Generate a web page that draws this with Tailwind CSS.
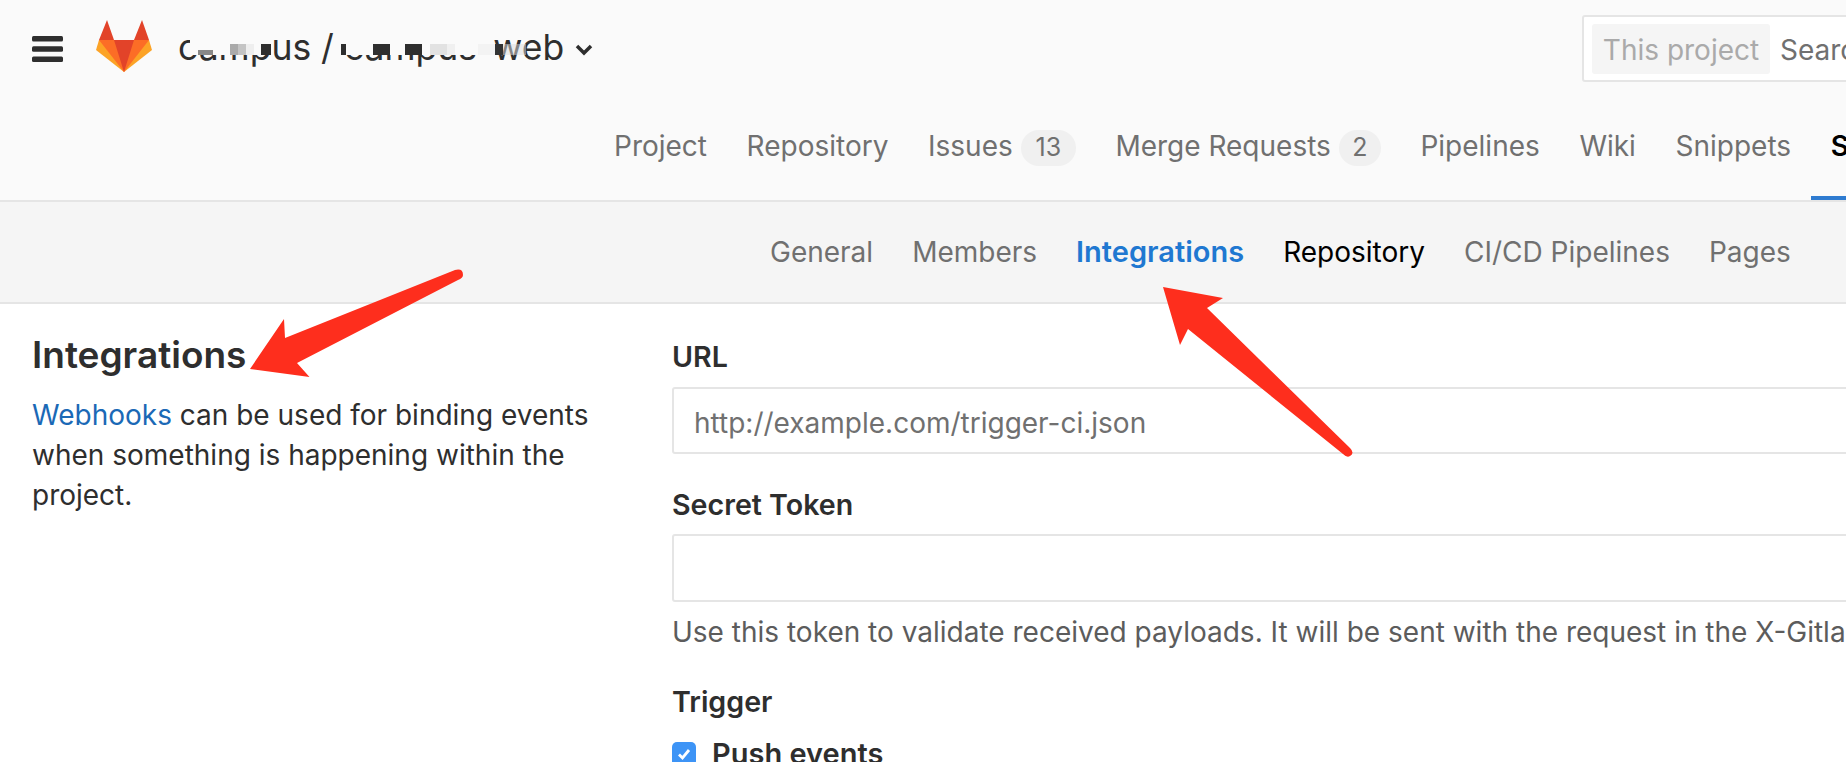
<!DOCTYPE html>
<html lang="en">
<head>
  <meta charset="UTF-8" />
  <title>Integrations</title>
  <script src="https://cdn.jsdelivr.net/npm/@tailwindcss/browser@4"></script>
</head>
<body class="relative w-[1846px] h-[762px] overflow-hidden bg-white font-['Inter',sans-serif] text-[28px] text-[#2e2e2e]">

  <!-- Header -->
  <header class="h-[202px] bg-[#fafafa] border-b-2 border-[#e5e5e5]">
    <div class="h-[100px] flex items-start">
      <svg class="w-[31px] h-[26px] ml-8 mt-[36px]" viewBox="0 0 31 26"><rect width="31" height="5.5" rx="1.5" fill="#2e2e2e"/><rect y="10.2" width="31" height="5.5" rx="1.5" fill="#2e2e2e"/><rect y="20.5" width="31" height="5.5" rx="1.5" fill="#2e2e2e"/></svg>
      <svg class="w-[56px] h-[52px] ml-[33px] mt-5" viewBox="0 0 56 52">
        <path d="M28 52 0 30 3 20h50l3 10z" fill="#fca326"/>
        <path d="M28 52 3 20h50z" fill="#fc6d26"/>
        <path d="M28 52 18 20h20z" fill="#e24329"/>
        <path d="M3 20 11 0l7 20z" fill="#e24329"/>
        <path d="M53 20 46 0l-8 20z" fill="#e24329"/>
      </svg>
      <div class="relative ml-[26px] mt-[26px] flex items-center">
        <span class="text-[35.5px] leading-[44px] whitespace-nowrap">campus / campus-web</span>
        <svg class="w-[18px] h-[12px] ml-[11px] mt-[4px]" viewBox="0 0 18 12"><path d="M2 2l7 7 7-7" fill="none" stroke="#2e2e2e" stroke-width="3.5"/></svg>
        <!-- pixelated redaction over the project name -->
        <div class="absolute left-[12px] top-[14px] h-[4px] w-[81px] bg-[#fafafa]"></div>
        <div class="absolute left-[163px] top-[14px] h-[4px] w-[150px] bg-[#fafafa]"></div>
        <div class="absolute left-[12px] top-[18px] h-[11px] flex">
          <span class="w-[8px] bg-[#fafafa]"></span>
          <span class="w-[15px] bg-[#fafafa] flex items-end"><span class="w-full h-[5px] bg-[#888888]"></span></span>
          <span class="w-[17px] bg-[#fafafa]"></span>
          <span class="w-[8px] bg-[#aaaaaa]"></span>
          <span class="w-[8px] bg-[#c4c4c4]"></span>
          <span class="w-[8px] bg-[#eeeeee]"></span>
          <span class="w-[7px] bg-[#fafafa]"></span>
          <span class="w-[10px] bg-[#2e2e2e]"></span>
          <span class="w-[70px]"></span>
          <span class="w-[5px] bg-[#2e2e2e]"></span>
          <span class="w-[27px] bg-[#fafafa]"></span>
          <span class="w-[17px] bg-[#2e2e2e]"></span>
          <span class="w-[15px] bg-[#fafafa]"></span>
          <span class="w-[17px] bg-[#2e2e2e]"></span>
          <span class="w-[8px] bg-[#fafafa]"></span>
          <span class="w-[17px] bg-[#e2e2e2]"></span>
          <span class="w-[8px] bg-[#f0f0f0]"></span>
          <span class="w-[23px] bg-[#fafafa]"></span>
          <span class="w-[17px] bg-[#f3f3f3]"></span>
          <span class="w-[8px] bg-[#333333]"></span>
          <span class="w-[23px] bg-[#dcdcdc]/50"></span>
        </div>
      </div>
      <div class="ml-auto mt-[15px] w-[300px] h-[67px] shrink-0 -mr-9 bg-white border-2 border-[#e5e5e5] rounded-[3px] flex items-center pl-2">
        <span class="w-[178px] h-[50px] pt-[2px] bg-[#f5f5f5] rounded-[3px] flex items-center justify-center text-[#aaaaaa] whitespace-nowrap">This project</span>
        <span class="ml-[10px] pt-[2px] text-[#707070]">Search</span>
      </div>
    </div>
    <nav class="h-[100px] pl-[614px] flex gap-[39.6px] text-[#707070] whitespace-nowrap">
      <a class="h-[92px] flex items-center">Project</a>
      <a class="h-[92px] flex items-center">Repository</a>
      <a class="h-[92px] flex items-center gap-2">Issues <span class="mt-1 w-[55px] h-9 rounded-full bg-[#f0f0f0] flex items-center justify-center text-[25px]">13</span></a>
      <a class="h-[92px] flex items-center gap-2">Merge Requests <span class="mt-1 w-[42px] h-9 rounded-full bg-[#f0f0f0] flex items-center justify-center text-[25px]">2</span></a>
      <a class="h-[92px] flex items-center">Pipelines</a>
      <a class="h-[92px] flex items-center">Wiki</a>
      <a class="h-[92px] flex items-center">Snippets</a>
      <a class="-ml-5 pl-5 pr-5 pb-1 h-[100px] flex items-center border-b-4 border-[#2e7bd0] font-semibold text-black">Settings</a>
    </nav>
  </header>

  <!-- Sub nav -->
  <nav class="h-[102px] bg-[#f5f5f5] border-b-2 border-[#e5e5e5] pl-[770px] flex items-center gap-[39px] text-[#707070] whitespace-nowrap">
    <a>General</a>
    <a>Members</a>
    <a class="text-[29px] font-semibold text-[#1f78d1]">Integrations</a>
    <a class="text-black">Repository</a>
    <a>CI/CD Pipelines</a>
    <a>Pages</a>
  </nav>

  <!-- Content -->
  <main class="flex pl-[32px]">
    <section class="w-[640px] shrink-0 pt-[29px]">
      <h2 class="text-[37px] leading-[44px] font-semibold">Integrations</h2>
      <p class="mt-[18px] w-[570px] leading-10"><a class="text-[#1b69b6]">Webhooks</a> can be used for binding events when something is happening within the project.</p>
    </section>
    <form class="flex-1 pt-[35px] whitespace-nowrap text-[28.6px]">
      <label class="block leading-9 font-semibold">URL</label>
      <div class="mt-[12px] h-[67px] w-[1300px] pt-1 border-2 border-[#e5e5e5] rounded-[3px] pl-5 flex items-center text-[28px] text-[#707070]">http://example.com/trigger-ci.json</div>
      <label class="block mt-[33px] leading-9 font-semibold">Secret Token</label>
      <div class="mt-[11px] h-[68px] w-[1300px] border-2 border-[#e5e5e5] rounded-[3px]"></div>
      <p class="mt-[12px] leading-9 text-[28px] text-[#5c5c5c]">Use this token to validate received payloads. It will be sent with the request in the X-Gitlab-Token HTTP header.</p>
      <label class="block mt-[34px] leading-9 font-semibold">Trigger</label>
      <div class="mt-[12px] flex items-center gap-4 text-[29px] font-semibold">
        <span class="w-6 h-6 rounded-[5px] bg-[#3d94f6] flex items-center justify-center">
          <svg class="w-4 h-4" viewBox="0 0 16 16"><path d="M3 8.5l3.5 3.5L13 4" fill="none" stroke="#fff" stroke-width="2.8"/></svg>
        </span>
        Push events
      </div>
    </form>
  </main>

  <!-- Annotation arrows -->
  <svg class="absolute left-0 top-0 pointer-events-none" width="1846" height="762" viewBox="0 0 1846 762">
    <path d="M250 369 284 319 285 338 455 270Q463 268 463 275 463 278 458 280L297 363 309.5 377Z" fill="#fe2e1d"/>
    <path d="M1163 287 1223 298 1207 308 1350 448Q1355 453 1350 456 1347 458 1343 454L1188 329 1180 345Z" fill="#fe2e1d"/>
  </svg>
</body>
</html>
